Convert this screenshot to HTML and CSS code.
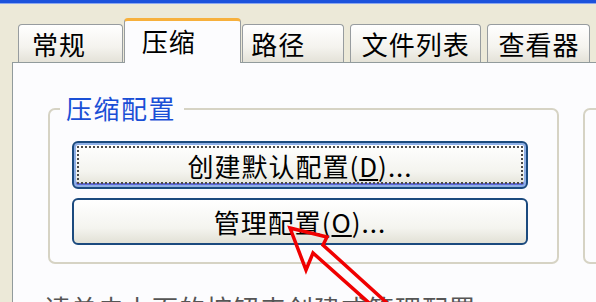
FILE: index.html
```html
<!DOCTYPE html>
<html lang="zh-CN">
<head>
    <meta charset="UTF-8">
    <title>压缩选项</title>
    <link rel="stylesheet" href="styles.css">
</head>
<body>
    <div class="titlebar"></div>
    <div class="tabs">
        <div class="tab tab-general">常规</div>
        <div class="tab tab-active">压缩</div>
        <div class="tab tab-path">路径</div>
        <div class="tab tab-files">文件列表</div>
        <div class="tab tab-viewer">查看器</div>
    </div>
    <div class="panel">
        <div class="groups">
            <div class="group">
                <span class="group-title">压缩配置</span>
                <button class="btn btn-default">创建默认配置(<u>D</u>)...</button>
                <button class="btn">管理配置(<u>O</u>)...</button>
            </div>
            <div class="group group-side"></div>
        </div>
        <p class="hint">请单击上面的按钮来创建或管理配置</p>
    </div>

    <!-- red arrow drawn over the dialog -->
    <svg class="arrow" width="596" height="302" viewBox="0 0 596 302">
        <polygon points="290,228 327,237 323,245 398,313 386,318 313,253 306,270"
                 fill="none" stroke="#f00000" stroke-width="3.5" stroke-linejoin="miter"/>
    </svg>
</body>
</html>
```

FILE: styles.css
```css
body {
    margin: 0;
    width: 596px;
    height: 302px;
    overflow: hidden;
    position: relative;
    background-color: #ece9d8;
    font-family: "Noto Sans CJK SC", "Noto Sans", sans-serif;
    color: #000;
}
.titlebar {
    height: 3px;
    background-color: #1c52dc;
    border-bottom: 1px solid #8ca8f0;
}
.tabs {
    display: flex;
    align-items: flex-end;
    height: 58px;
    padding-left: 18px;
}
.tab {
    box-sizing: border-box;
    height: 38px;
    margin-right: 6px;
    border: 1px solid #979c9f;
    border-bottom: none;
    border-radius: 4px 4px 0 0;
    background: linear-gradient(#ffffff, #f4f3ee 60%, #e4e2d8);
    font-size: 26px;
    letter-spacing: 1px;
    line-height: 38px;
    white-space: nowrap;
}
.tab-general {
    width: 105px;
    padding-left: 13px;
}
.tab-active {
    position: relative;
    z-index: 1;
    width: 118px;
    height: 45px;
    margin: 0 1px -1px -5px;
    padding-left: 17px;
    background: #fcfcfe;
    border-top: 3px solid #f7b03c;
    line-height: 40px;
}
.tab-path {
    width: 102px;
    padding-left: 8px;
}
.tab-files {
    width: 132px;
    padding-left: 11px;
}
.tab-viewer {
    width: 103px;
    padding-left: 10px;
}
.panel {
    box-sizing: border-box;
    width: 700px;
    height: 240px;
    margin-left: 12px;
    padding: 45px 0 0 35px;
    background-color: #fcfcfe;
    border-top: 1px solid #919b9c;
    border-left: 1px solid #919b9c;
}
.groups {
    display: flex;
    gap: 24px;
}
.group {
    position: relative;
    box-sizing: border-box;
    flex-shrink: 0;
    width: 511px;
    height: 156px;
    padding: 31px 0 0 22px;
    border: 2px solid #d6d3c4;
    border-radius: 7px;
}
.group-side {
    width: 200px;
}
.group-title {
    position: absolute;
    top: -19px;
    left: 10px;
    padding: 0 8px 0 6px;
    background-color: #fcfcfe;
    color: #1a4fd6;
    font-size: 26px;
    letter-spacing: 1.5px;
    line-height: 34px;
}
.btn {
    display: block;
    box-sizing: border-box;
    width: 456px;
    height: 47px;
    margin-bottom: 9px;
    border: 2px solid #1b4a7e;
    border-radius: 6px;
    background: linear-gradient(#ffffff, #f4f4ef 65%, #e2e1d6);
    font-family: inherit;
    font-size: 26px;
    letter-spacing: 1px;
    color: #000;
    padding: 0;
}
.btn-default {
    height: 48px;
    box-shadow: inset 0 0 0 2px #8fb0e6, inset 0 -2px 0 2px #5d66d6;
    outline: 2px dotted #4a4a4a;
    outline-offset: -7px;
}
.hint {
    margin: 25px 0 0 -4px;
    color: #555;
    font-size: 26px;
    letter-spacing: 1px;
    white-space: nowrap;
}
.arrow {
    position: absolute;
    top: 0;
    left: 0;
    pointer-events: none;
}
```
